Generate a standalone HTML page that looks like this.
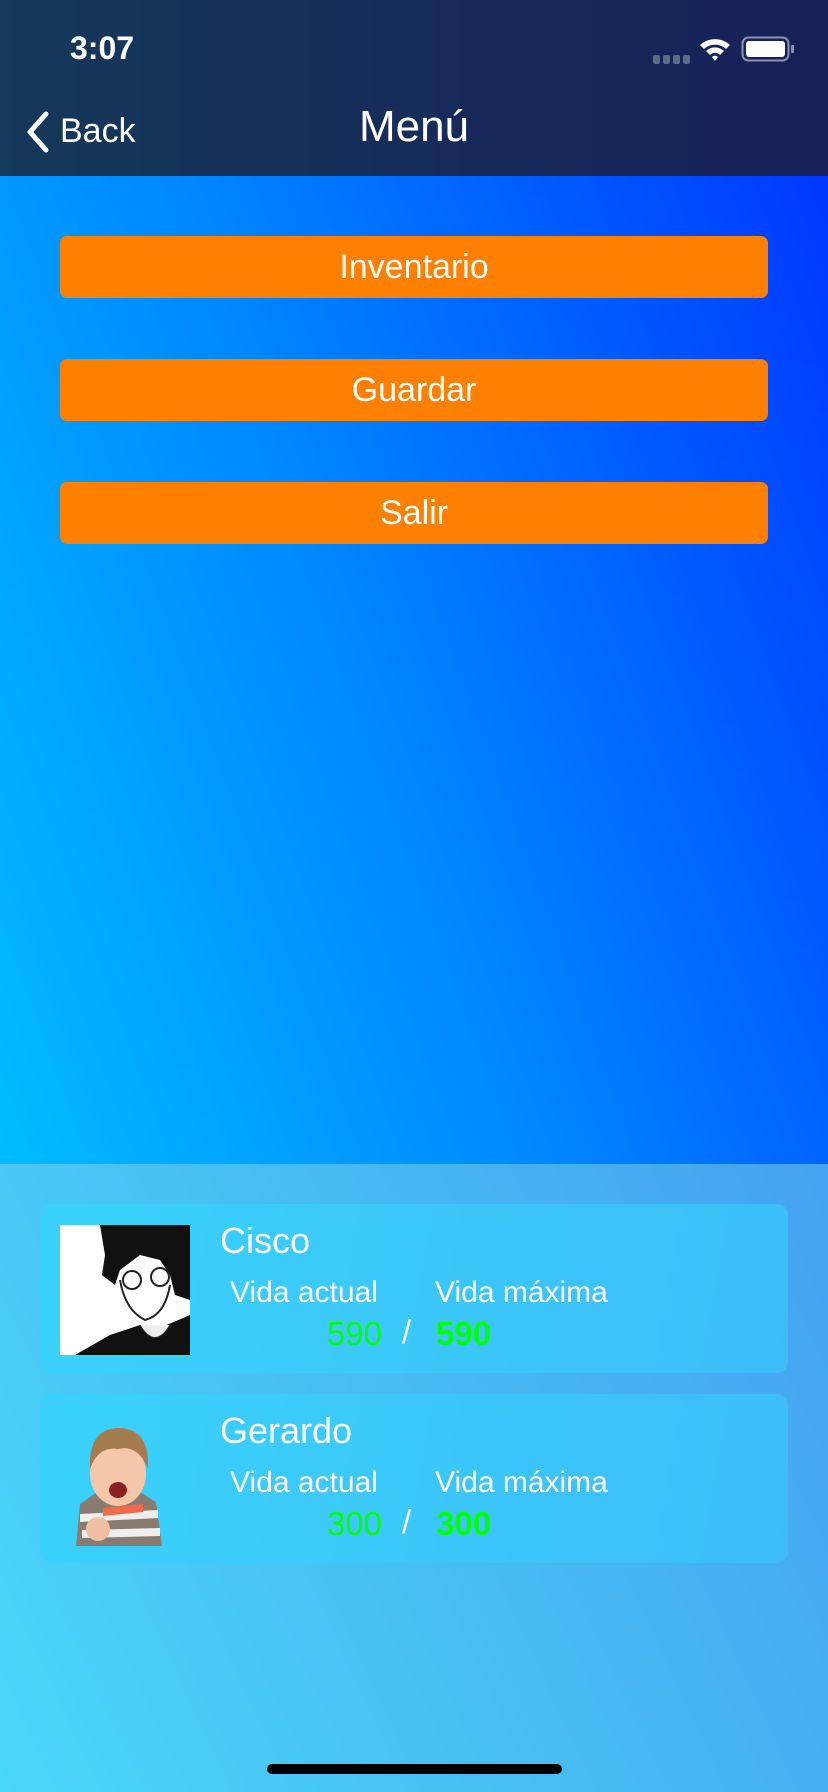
<!DOCTYPE html>
<html><head><meta charset="utf-8">
<style>
*{margin:0;padding:0;box-sizing:border-box}
html,body{width:828px;height:1792px;overflow:hidden}
body{font-family:"Liberation Sans",sans-serif;color:#fff;position:relative;
background:linear-gradient(to top right,#4ad6f8 0%,#46b0f2 50%,#4688f4 100%)}
.hdr{position:absolute;left:0;top:0;width:828px;height:176px;background:linear-gradient(90deg,#15395a,#161f58)}
.top{position:absolute;left:0;top:176px;width:828px;height:988px;
background:linear-gradient(70deg,#00bcff 0%,#0088ff 45%,#0038ff 100%)}
.btn{position:absolute;left:60px;width:708px;height:62px;background:#ff7f00;border-radius:7px;
text-align:center;line-height:62px;font-size:34px}
.card{position:absolute;left:40px;width:748px;height:169px;border-radius:11px;
background:linear-gradient(100deg,#3ad2fc,#3cbdf8)}
.t{position:absolute;white-space:nowrap}
.g{color:#00ff00}
</style></head><body>
<div class="hdr"></div>
<div class="t" style="left:70px;top:30px;font-size:32px;font-weight:bold">3:07</div>
<div class="t" style="left:653px;top:53px">
<svg width="140" height="14" viewBox="0 0 140 14"><g fill="#5a6b85"><rect x="0" y="2" width="7" height="9" rx="2"/><rect x="10" y="2" width="7" height="9" rx="2"/><rect x="20" y="2" width="7" height="9" rx="2"/><rect x="30" y="2" width="7" height="9" rx="2"/></g></svg></div>
<svg class="t" style="left:698px;top:36px" width="34" height="26" viewBox="0 0 34 26"><path d="M2 9 A22 22 0 0 1 32 9 L28 13 A16 16 0 0 0 6 13Z M8 15 A13 13 0 0 1 26 15 L22 19 A7 7 0 0 0 12 19Z M14 21 A4 4 0 0 1 20 21 L17 25Z" fill="#fff"/></svg>
<svg class="t" style="left:741px;top:36px" width="54" height="26" viewBox="0 0 54 26"><rect x="1.5" y="1.5" width="46" height="23" rx="6" fill="none" stroke="#8a93ab" stroke-width="2"/><rect x="5" y="5" width="39" height="16" rx="3" fill="#fff"/><rect x="50" y="9" width="3" height="8" rx="1" fill="#8a93ab"/></svg>
<svg class="t" style="left:24px;top:110px" width="28" height="44" viewBox="0 0 28 44"><path d="M22 4 L6 22 L22 40" fill="none" stroke="#fff" stroke-width="5" stroke-linecap="round" stroke-linejoin="round"/></svg>
<div class="t" style="left:60px;top:112px;font-size:34px">Back</div>
<div class="t" style="left:0;width:828px;text-align:center;top:102px;font-size:44px">Menú</div>
<div class="top"></div>
<div class="btn" style="top:236px">Inventario</div>
<div class="btn" style="top:359px">Guardar</div>
<div class="btn" style="top:482px">Salir</div>

<div class="card" style="top:1204px"></div>
<div class="card" style="top:1394px"></div>

<svg class="t" style="left:60px;top:1225px" width="130" height="130" viewBox="0 0 130 130">
<rect width="130" height="130" fill="#fff"/>
<path d="M40 0 L130 0 L130 75 L115 70 L110 50 L100 35 L80 30 L60 45 L55 60 L42 50 L45 30 Z" fill="#111"/>
<path d="M60 55 Q65 85 85 95 Q105 90 110 60" fill="none" stroke="#222" stroke-width="2"/>
<circle cx="72" cy="55" r="9" fill="none" stroke="#222" stroke-width="2"/><circle cx="100" cy="52" r="9" fill="none" stroke="#222" stroke-width="2"/>
<path d="M15 130 L50 110 L80 100 L95 105 L130 90 L130 130Z" fill="#111"/>
<path d="M80 100 Q95 125 110 100" fill="#eee" stroke="#333"/>
</svg>
<svg class="t" style="left:68px;top:1424px" width="98" height="122" viewBox="0 0 98 122">
<path d="M8 122 L12 80 L35 64 L65 64 L88 78 L94 122Z" fill="#8a7b70"/>
<path d="M12 90 L90 86 L90 94 L12 98Z M14 106 L92 104 L92 112 L14 114Z" fill="#eee"/>
<path d="M35 84 L75 80 L75 88 L35 92Z" fill="#f26a4a"/>
<ellipse cx="50" cy="50" rx="28" ry="32" fill="#f3c7a8"/>
<path d="M22 45 Q20 5 50 4 Q82 4 80 45 Q70 20 50 25 Q30 22 22 45Z" fill="#a57c4e"/>
<ellipse cx="50" cy="66" rx="9" ry="8" fill="#8b2020"/>
<ellipse cx="30" cy="105" rx="12" ry="12" fill="#f0c0a0"/>
</svg>

<div class="t" style="left:220px;top:1220px;font-size:36px">Cisco</div>
<div class="t" style="left:230px;top:1276px;font-size:30px">Vida actual</div>
<div class="t" style="left:435px;top:1276px;font-size:30px">Vida máxima</div>
<div class="t g" style="left:250px;width:132px;text-align:right;top:1315px;font-size:33px">590</div>
<div class="t" style="left:402px;top:1313px;font-size:33px">/</div>
<div class="t g" style="left:436px;top:1315px;font-size:33px;font-weight:bold">590</div>

<div class="t" style="left:220px;top:1410px;font-size:36px">Gerardo</div>
<div class="t" style="left:230px;top:1466px;font-size:30px">Vida actual</div>
<div class="t" style="left:435px;top:1466px;font-size:30px">Vida máxima</div>
<div class="t g" style="left:250px;width:132px;text-align:right;top:1505px;font-size:33px">300</div>
<div class="t" style="left:402px;top:1503px;font-size:33px">/</div>
<div class="t g" style="left:436px;top:1505px;font-size:33px;font-weight:bold">300</div>

<div class="t" style="left:267px;top:1764px;width:295px;height:10px;border-radius:5px;background:#000"></div>
</body></html>
